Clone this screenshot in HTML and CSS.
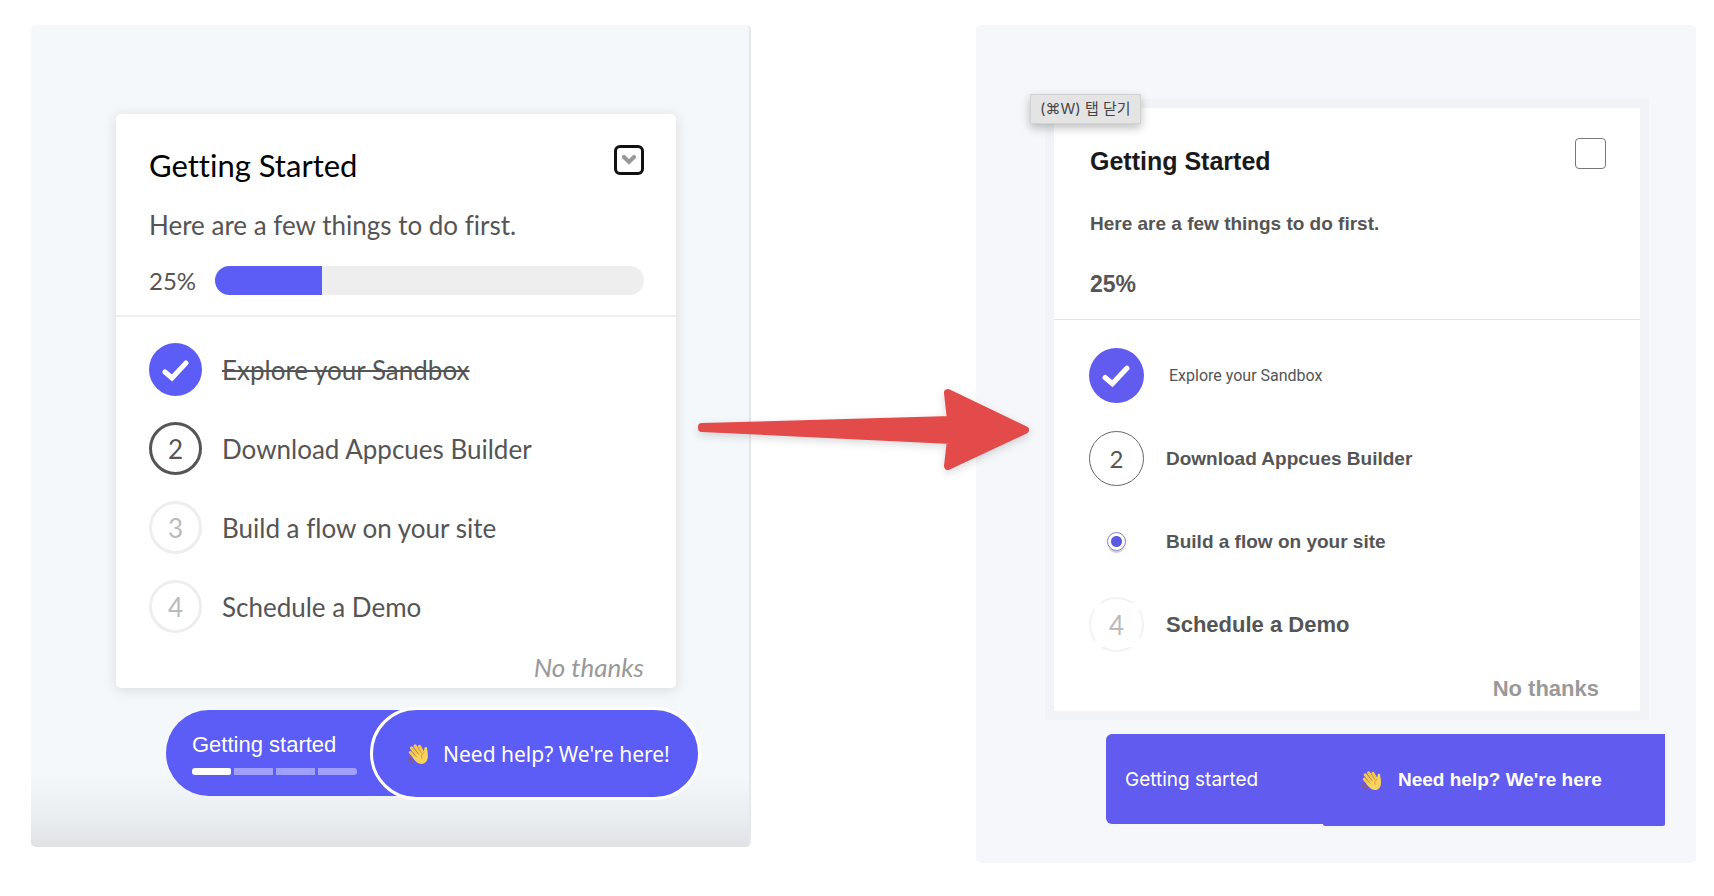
FILE: index.html
```html
<!DOCTYPE html>
<html lang="en">
<head>
    <meta charset="UTF-8">
    <meta name="viewport" content="width=device-width, initial-scale=1.0">
    <title>Getting Started checklist</title>
    <link rel="stylesheet" href="styles.css">
</head>
<body>
    <!-- shared icons -->
    <svg class="defs" aria-hidden="true">
        <symbol id="wave" viewBox="0 0 24 24">
            <g fill="none" stroke="#f5c84c" stroke-width="3.2" stroke-linecap="round">
                <path d="M4.5 10.5L10 17"/>
                <path d="M5.5 6L12 14"/>
                <path d="M9 4L14.5 12"/>
                <path d="M13.5 4.5L17 11"/>
            </g>
            <path fill="#f8d25c" d="M8 14L16.5 9.5C18 10.5 18 8 18.4 6.2C18.8 4.4 21 4.6 21.1 6.4C21.3 9 22 11 21.9 14.5C21.8 19 19 22 15.4 22C12 22 9.4 19 7 16Z"/>
            <path fill="none" stroke="#c48b2e" stroke-width="0.7" stroke-linecap="round" d="M5.8 9.5L10.5 15M8.5 6.8L13 12.6M12 5.5L15.6 11.2M18 10.5C15.6 11.8 15 14 15.6 16"/>
            <path fill="none" stroke="#8a5a78" stroke-width="1.2" stroke-linecap="round" d="M1.8 15.5C2.2 18 3.8 20 6.2 21M4 14.8C4.4 16.6 5.4 17.8 7 18.6"/>
        </symbol>
        <symbol id="check" viewBox="0 0 28 28">
            <path fill="none" stroke="#fff" stroke-width="5" stroke-linejoin="miter" stroke-linecap="round" d="M3 16L10 22L24 7"/>
        </symbol>
    </svg>

    <main class="compare">
        <section class="panel before">
            <div class="card">
                <div class="card-header">
                    <div class="title-row">
                        <h2>Getting Started</h2>
                        <button class="collapse" type="button" aria-label="Collapse checklist">
                            <svg width="16" height="10" viewBox="0 0 16 10" aria-hidden="true">
                                <path fill="none" stroke="#999" stroke-width="4" stroke-linecap="round" d="M3 2L8 7L13 2"/>
                            </svg>
                        </button>
                    </div>
                    <p class="intro">Here are a few things to do first.</p>
                    <div class="progress">
                        <span class="percent">25%</span>
                        <div class="track"><div class="fill" style="width: 25%"></div></div>
                    </div>
                </div>
                <ol class="steps">
                    <li class="step"><span class="mark done"><svg width="28" height="28" aria-label="Done"><use href="#check"/></svg></span><del>Explore your Sandbox</del></li>
                    <li class="step"><span class="mark current">2</span><span>Download Appcues Builder</span></li>
                    <li class="step"><span class="mark">3</span><span>Build a flow on your site</span></li>
                    <li class="step"><span class="mark">4</span><span>Schedule a Demo</span></li>
                </ol>
                <button class="dismiss" type="button">No thanks</button>
            </div>
            <div class="launchers">
                <button class="launcher start" type="button">
                    <span>Getting started</span>
                    <span class="segments"><i class="on"></i><i></i><i></i><i></i></span>
                </button>
                <button class="launcher help" type="button">
                    <svg width="24" height="24" aria-hidden="true"><use href="#wave"/></svg>
                    <span>Need help? We're here!</span>
                </button>
            </div>
        </section>

        <section class="panel after">
            <div class="tooltip" lang="ko">(⌘W) 탭 닫기</div>
            <div class="card">
                <div class="card-header">
                    <div class="title-row">
                        <h2>Getting Started</h2>
                        <input class="collapse" type="checkbox" aria-label="Collapse checklist">
                    </div>
                    <p class="intro">Here are a few things to do first.</p>
                    <p class="percent">25%</p>
                </div>
                <ol class="steps">
                    <li class="step"><span class="mark done"><svg width="29" height="29" aria-label="Done"><use href="#check"/></svg></span><span class="small">Explore your Sandbox</span></li>
                    <li class="step"><span class="mark current">2</span><span>Download Appcues Builder</span></li>
                    <li class="step"><span class="mark pick"><input type="radio" id="step-flow" name="step" checked></span><label for="step-flow">Build a flow on your site</label></li>
                    <li class="step"><span class="mark faded"><span>4</span></span><span class="large">Schedule a Demo</span></li>
                </ol>
                <button class="dismiss" type="button">No thanks</button>
            </div>
            <div class="launchers">
                <button class="launcher start" type="button">Getting started</button>
                <button class="launcher help" type="button">
                    <svg width="23" height="23" aria-hidden="true"><use href="#wave"/></svg>
                    <span>Need help? We're here</span>
                </button>
            </div>
        </section>

        <svg class="arrow" width="334" height="86" viewBox="0 0 334 86" aria-hidden="true">
            <path fill="#e34b4b" stroke="#e34b4b" stroke-width="8" stroke-linejoin="round" d="M5 40L254 33L251 6L328 43L251 79L254 53L5 41Z"/>
        </svg>
    </main>
</body>
</html>
```
FILE: styles.css
```css
* {
    box-sizing: border-box;
}
body {
    margin: 0;
    background: #fff;
    color: #555;
    font-family: Lato, "Liberation Sans", sans-serif;
    font-variant-ligatures: none;
}
h2, p, ol {
    margin: 0;
    padding: 0;
}
button {
    border: none;
    padding: 0;
    background: none;
    font: inherit;
    color: inherit;
    cursor: pointer;
}
.defs {
    position: absolute;
    width: 0;
    height: 0;
}

/* layout */
.compare {
    position: relative;
    display: grid;
    grid-template-columns: 1fr 1fr;
    align-items: start;
    gap: 225px;
    padding: 25px 18px 24px 31px;
}
.arrow {
    position: absolute;
    top: 387px;
    left: calc(50% - 160px);
    filter: drop-shadow(0 3px 4px rgba(0, 0, 0, 0.15));
}
.panel {
    position: relative;
    border-radius: 5px;
}
.card {
    background: #fff;
}
.title-row {
    display: flex;
    justify-content: space-between;
    align-items: flex-start;
}
.steps {
    display: flex;
    flex-direction: column;
    list-style: none;
}
.step {
    display: flex;
    align-items: center;
}
.mark {
    display: flex;
    align-items: center;
    justify-content: center;
    border-radius: 50%;
}
.dismiss {
    display: block;
    margin-left: auto;
    color: #999;
}
.launchers {
    display: flex;
    align-items: flex-start;
}
.launcher {
    color: #fff;
    white-space: nowrap;
}
.help {
    flex: 1;
    display: flex;
    align-items: center;
}

/* left panel */
.before {
    padding: 89px 0 47px;
    background: linear-gradient(to top, #dfe1e3, #e9ecef 24px, #f4f8fb 72px);
    border-right: 2px solid #e6e8ea;
}
.before .card {
    margin: 0 73px 0 85px;
    padding-bottom: 5px;
    border-radius: 5px;
    box-shadow: 0 2px 14px rgba(0, 0, 0, 0.12);
    font-size: 26px;
    line-height: 32px;
}
.before .card-header {
    padding: 31px 32px 20px 33px;
    border-bottom: 2px solid #eee;
}
.before h2 {
    font-size: 31px;
    font-weight: 400;
    line-height: 40px;
    color: #000;
}
.before .collapse {
    display: flex;
    align-items: center;
    justify-content: center;
    width: 30px;
    height: 30px;
    border: 3px solid #111;
    border-radius: 6px;
}
.before .intro {
    margin-top: 24px;
}
.progress {
    display: flex;
    align-items: center;
    gap: 16px;
    height: 29px;
    margin-top: 25px;
}
.before .percent {
    width: 50px;
    font-size: 24px;
}
.track {
    flex: 1;
    height: 29px;
    border-radius: 15px;
    overflow: hidden;
    background: #eee;
}
.fill {
    height: 100%;
    background: #5c5cf7;
}
.before .steps {
    gap: 26px;
    padding: 26px 33px 0;
}
.before .step {
    gap: 20px;
}
.before .mark {
    width: 53px;
    height: 53px;
    border: 3px solid #eee;
    color: #bbb;
}
.before .current {
    border-color: #555;
    color: #555;
}
.before .done {
    border: none;
    background: #5c5cf7;
}
.before .dismiss {
    margin-top: 18px;
    margin-right: 32px;
    font-size: 26px;
    font-style: italic;
}
.before .launchers {
    margin: 19px 48px 0 135px;
}
.before .launcher {
    background: #5c5cf7;
    font-size: 22px;
    line-height: 28px;
}
.before .start {
    width: 247px;
    height: 86px;
    margin-top: 3px;
    padding: 0 26px;
    border-radius: 43px 0 0 43px;
    font-family: "Liberation Sans", Arial, sans-serif;
    text-align: left;
}
.segments {
    display: flex;
    gap: 3px;
    width: 165px;
    margin-top: 9px;
    border-radius: 3px;
    overflow: hidden;
}
.segments i {
    flex: 1;
    height: 7px;
    background: #a09ffa;
}
.segments .on {
    background: #fff;
    border-radius: 0 2px 2px 0;
}
.before .help {
    gap: 13px;
    height: 93px;
    margin-left: -43px;
    padding-left: 33px;
    border: 3px solid #fff;
    border-radius: 47px;
    font-family: "Noto Sans", sans-serif;
    font-size: 21px;
}

/* right panel */
.after {
    padding: 74px 0 37px;
    background: #f5f7fb;
    font-family: "Liberation Sans", Arial, sans-serif;
}
.tooltip {
    position: absolute;
    top: 69px;
    left: 54px;
    padding: 0 9px;
    border: 1px solid #d2d2d2;
    background: #e4e4e4;
    box-shadow: 0 4px 9px rgba(0, 0, 0, 0.25);
    font-family: Inter, "Noto Sans CJK KR", sans-serif;
    font-size: 15px;
    line-height: 28px;
    color: #444;
}
.after .card {
    margin: 0 47px 0 69px;
    padding-bottom: 8px;
    border: 9px solid #f1f3f6;
    background-clip: padding-box;
    font-size: 19px;
    font-weight: 700;
    line-height: 28px;
}
.after .card-header {
    padding: 30px 34px 21px 36px;
    border-bottom: 1px solid #e4e4e4;
}
.after h2 {
    margin-top: 5px;
    font-size: 25px;
    line-height: 36px;
    color: #1a1a1a;
}
.after .collapse {
    appearance: none;
    width: 31px;
    height: 31px;
    margin: 0;
    border: 1px solid #777;
    border-radius: 4px;
    background: #fff;
}
.after .intro {
    margin-top: 31px;
}
.after .percent {
    margin-top: 32px;
    font-size: 23px;
}
.after .steps {
    gap: 28px;
    padding: 28px 35px 0;
}
.after .step {
    gap: 22px;
}
.after .mark {
    width: 55px;
    height: 55px;
    border: 1px solid #666;
    font-family: Lato, sans-serif;
    font-size: 24px;
    font-weight: 400;
}
.after .done {
    border: none;
    background: #625bf0;
}
.after .pick {
    border: none;
}
.pick input {
    appearance: none;
    width: 19px;
    height: 19px;
    margin: 0;
    border: 1px solid #8583c9;
    border-radius: 50%;
    background: radial-gradient(circle, #5b5be0 5px, #fff 6px);
    box-shadow: 0 3px 1px -1px #ccc;
}
.after .faded {
    border: 2px solid #f3f3f3;
}
.faded span {
    flex: none;
    width: 44px;
    background: #fff;
    font-size: 26px;
    line-height: 44px;
    text-align: center;
    color: #bbb;
}
.after .small {
    padding-left: 3px;
    font-family: Roboto, sans-serif;
    font-size: 16px;
    font-weight: 400;
}
.after .large {
    font-size: 22px;
}
.after .dismiss {
    margin-top: 23px;
    margin-right: 41px;
    font-size: 22px;
}
.after .launchers {
    margin: 14px 31px 0 130px;
}
.after .launcher {
    background: #625bf0;
    font-size: 19px;
}
.after .start {
    width: 217px;
    height: 90px;
    padding-left: 19px;
    border-radius: 6px 0 0 6px;
    font-family: Inter, sans-serif;
    text-align: left;
}
.after .help {
    gap: 15px;
    height: 92px;
    padding-left: 37px;
    border-radius: 0 0 2px 2px;
    font-weight: 700;
}
```
